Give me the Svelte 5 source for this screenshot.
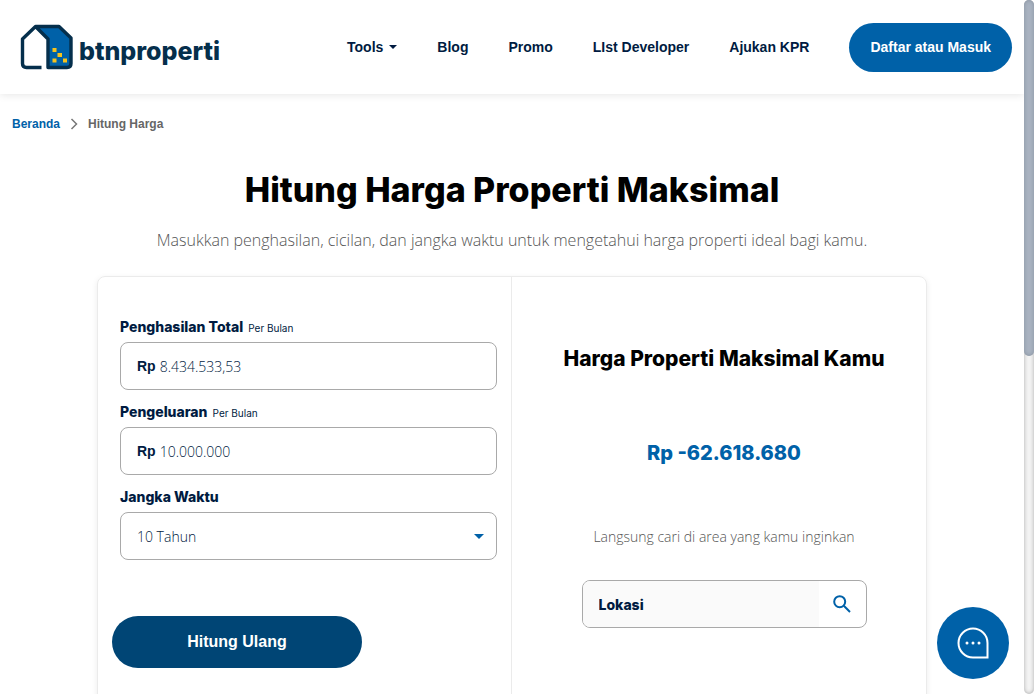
<script>
  const links = ['Blog', 'Promo', 'LIst Developer', 'Ajukan KPR'];
  let income = $state('8.434.533,53');
  let expense = $state('10.000.000');
  let term = $state('10 Tahun');
  let place = $state('');
</script>

<div class="shell">
  <div class="page">
    <header>
      <a class="logo" href="#home" aria-label="btnproperti">
        <svg width="54" height="46" viewBox="0 0 54 46" aria-hidden="true">
          <path d="M16 2.500H39L51 14V39.500Q51 43.500 47 43.500H27V15Z" fill="#0061a8" />
          <path d="M21.500 43.500H6.500Q2.500 43.500 2.500 39.500V15L15.500 2.500H39L51 14V39.500Q51 43.500 47 43.500H28V15L15.500 2.500" fill="none" stroke="#052f4c" stroke-width="3.400" stroke-linejoin="round" />
          <path d="M32.500 24h4v4h-4zM37.500 29h4.500v4h-4.500zM32.500 34.500h4v4h-4zM43 34.500h4v4h-4z" fill="#f7c31c" />
        </svg>
        <span>btnproperti</span>
      </a>
      <nav>
        <a href="#tools">Tools <i class="caret"></i></a>
        {#each links as link}
          <a href="#{link}">{link}</a>
        {/each}
        <button class="login" type="button">Daftar atau Masuk</button>
      </nav>
    </header>

    <div class="crumbs">
      <a href="#home">Beranda</a>
      <svg width="8" height="12" viewBox="0 0 8 12" aria-hidden="true"><path d="M1.500 1L6.500 6L1.500 11" fill="none" stroke="#777" stroke-width="1.500" /></svg>
      <span>Hitung Harga</span>
    </div>

    <main>
      <h1>Hitung Harga Properti Maksimal</h1>
      <p class="lead">Masukkan penghasilan, cicilan, dan jangka waktu untuk mengetahui harga properti ideal bagi kamu.</p>

      <section class="card">
        <form class="left">
          <label for="income">Penghasilan Total <small>Per Bulan</small></label>
          <div class="field"><b>Rp</b><input id="income" bind:value={income} /></div>
          <label for="expense">Pengeluaran <small>Per Bulan</small></label>
          <div class="field"><b>Rp</b><input id="expense" bind:value={expense} /></div>
          <label for="term">Jangka Waktu</label>
          <div class="field">
            <select id="term" bind:value={term}>
              <option>10 Tahun</option>
              <option>15 Tahun</option>
              <option>20 Tahun</option>
            </select>
            <i class="caret blue"></i>
          </div>
          <button class="again" type="button">Hitung Ulang</button>
        </form>
        <div class="right">
          <h2>Harga Properti Maksimal Kamu</h2>
          <output>Rp -62.618.680</output>
          <p>Langsung cari di area yang kamu inginkan</p>
          <div class="search">
            <input aria-label="Lokasi" placeholder="Lokasi" bind:value={place} />
            <button type="button" aria-label="Cari">
              <svg width="18" height="18" viewBox="0 0 18 18" aria-hidden="true"><circle cx="6.700" cy="6.700" r="5.500" /><path d="M10.800 10.800L17 17" /></svg>
            </button>
          </div>
        </div>
      </section>
    </main>
  </div>
  <div class="rail" aria-hidden="true"><div class="thumb"></div></div>
  <button class="chat" type="button" aria-label="Chat">
    <svg width="34" height="34" viewBox="0 0 34 34" aria-hidden="true">
      <path d="M31.500 31.500H17A14.500 14.500 0 1 1 31.500 17Z" fill="none" stroke="#fff" stroke-width="2" />
      <circle cx="11" cy="17" r="1.500" /><circle cx="17" cy="17" r="1.500" /><circle cx="23" cy="17" r="1.500" />
    </svg>
  </button>
</div>

<style>
  :global(body) { margin: 0; }
  * { box-sizing: border-box; }
  .shell {
    position: relative;
    display: flex;
    height: 100vh;
    background: #fff;
    color: #001b41;
    font-family: "Liberation Sans", Arial, sans-serif;
  }
  .page { flex: 1; min-width: 0; overflow: auto; scrollbar-width: none; }
  a { color: inherit; text-decoration: none; }
  button, input, select { font: inherit; color: inherit; border: 0; background: none; padding: 0; margin: 0; outline: 0; }
  button { cursor: pointer; }

  header {
    display: flex;
    align-items: center;
    justify-content: space-between;
    height: 94px;
    padding: 0 12px 0 20px;
    box-shadow: 0 1px 8px rgba(0, 0, 0, 0.1);
  }
  .logo { display: flex; align-items: center; gap: 5px; color: #052f4c; }
  .logo span { font: 800 25px/36px Inter, sans-serif; padding-top: 8px; }
  nav { display: flex; align-items: center; gap: 40px; font-size: 14px; font-weight: 700; white-space: nowrap; }
  nav a { display: flex; align-items: center; gap: 6px; }
  .caret { border: 4px solid transparent; border-top-color: currentColor; border-bottom: 0; }
  .login { height: 49px; padding: 0 21px; border-radius: 25px; background: #0061a8; color: #fff; }

  .crumbs { display: flex; align-items: center; gap: 10px; padding: 22px 12px 0; font-size: 12px; line-height: 16px; font-weight: 700; color: #666; }
  .crumbs a { color: #0061a8; }

  main { max-width: 830px; margin: 0 auto; text-align: center; }
  h1 { margin: 38px 0 0; font: 800 34px/40px Inter, sans-serif; color: #000; }
  .lead { margin: 18px 0 0; font: 300 16px/24px "Open Sans", sans-serif; color: #555; white-space: nowrap; }
  .card {
    display: grid;
    grid-template-columns: 1fr 1fr;
    margin-top: 24px;
    min-height: 480px;
    border: 1px solid #ebebeb;
    border-radius: 8px;
    box-shadow: 0 2px 6px rgba(0, 0, 0, 0.08);
  }
  .left { display: flex; flex-direction: column; padding: 40px 14px 24px 22px; border-right: 1px solid #ebebeb; text-align: left; }
  label { font: 800 14px/20px Inter, sans-serif; margin-bottom: 5px; }
  small { margin-left: 2px; font-size: 10px; line-height: 10px; font-weight: 400; }
  .field { display: flex; align-items: center; gap: 4px; height: 48px; margin-bottom: 12px; padding: 0 12px 0 16px; border: 1px solid #a9a9a9; border-radius: 8px; font-size: 14px; }
  .field input, .field select { flex: 1; min-width: 0; height: 100%; font: 300 14px "Open Sans", sans-serif; appearance: none; }
  .caret.blue { border-width: 5px 5px 0; color: #0061a8; }
  .again { align-self: flex-start; width: 250px; height: 52px; margin: 44px 0 0 -8px; border-radius: 26px; background: #004575; color: #fff; font-size: 16px; font-weight: 700; }
  .right { display: flex; flex-direction: column; align-items: center; padding: 70px 0 0 10px; }
  h2 { margin: 0; font: 800 21px/24px Inter, sans-serif; color: #000; }
  output { margin-top: 70px; font: 800 20px/24px Inter, sans-serif; color: #0061a8; }
  .right p { margin: 62px 0 0; font: 300 14px/20px "Open Sans", sans-serif; color: #555; }
  .search { display: flex; width: 285px; height: 48px; margin-top: 33px; border: 1px solid #a9a9a9; border-radius: 8px; overflow: hidden; }
  .search input { flex: 1; min-width: 0; padding: 0 16px; background: #fafafa; font: 800 14px Inter, sans-serif; }
  .search input::placeholder { color: #001b41; opacity: 1; }
  .search button { width: 47px; display: grid; place-items: center; }
  .search svg { fill: none; stroke: #0061a8; stroke-width: 2; }

  .rail { width: 10px; border-radius: 5px; background: #f4f4f4; box-shadow: inset 0 0 4px #aaa; }
  .thumb { height: 356px; border-radius: 5px; background: #a9b3c1; box-shadow: inset 0 0 4px #8993a0; }
  .chat { position: absolute; right: 25px; bottom: 15px; display: grid; place-items: center; width: 72px; height: 72px; border-radius: 50%; background: #0061a8; }
  .chat circle { fill: #fff; }
</style>
